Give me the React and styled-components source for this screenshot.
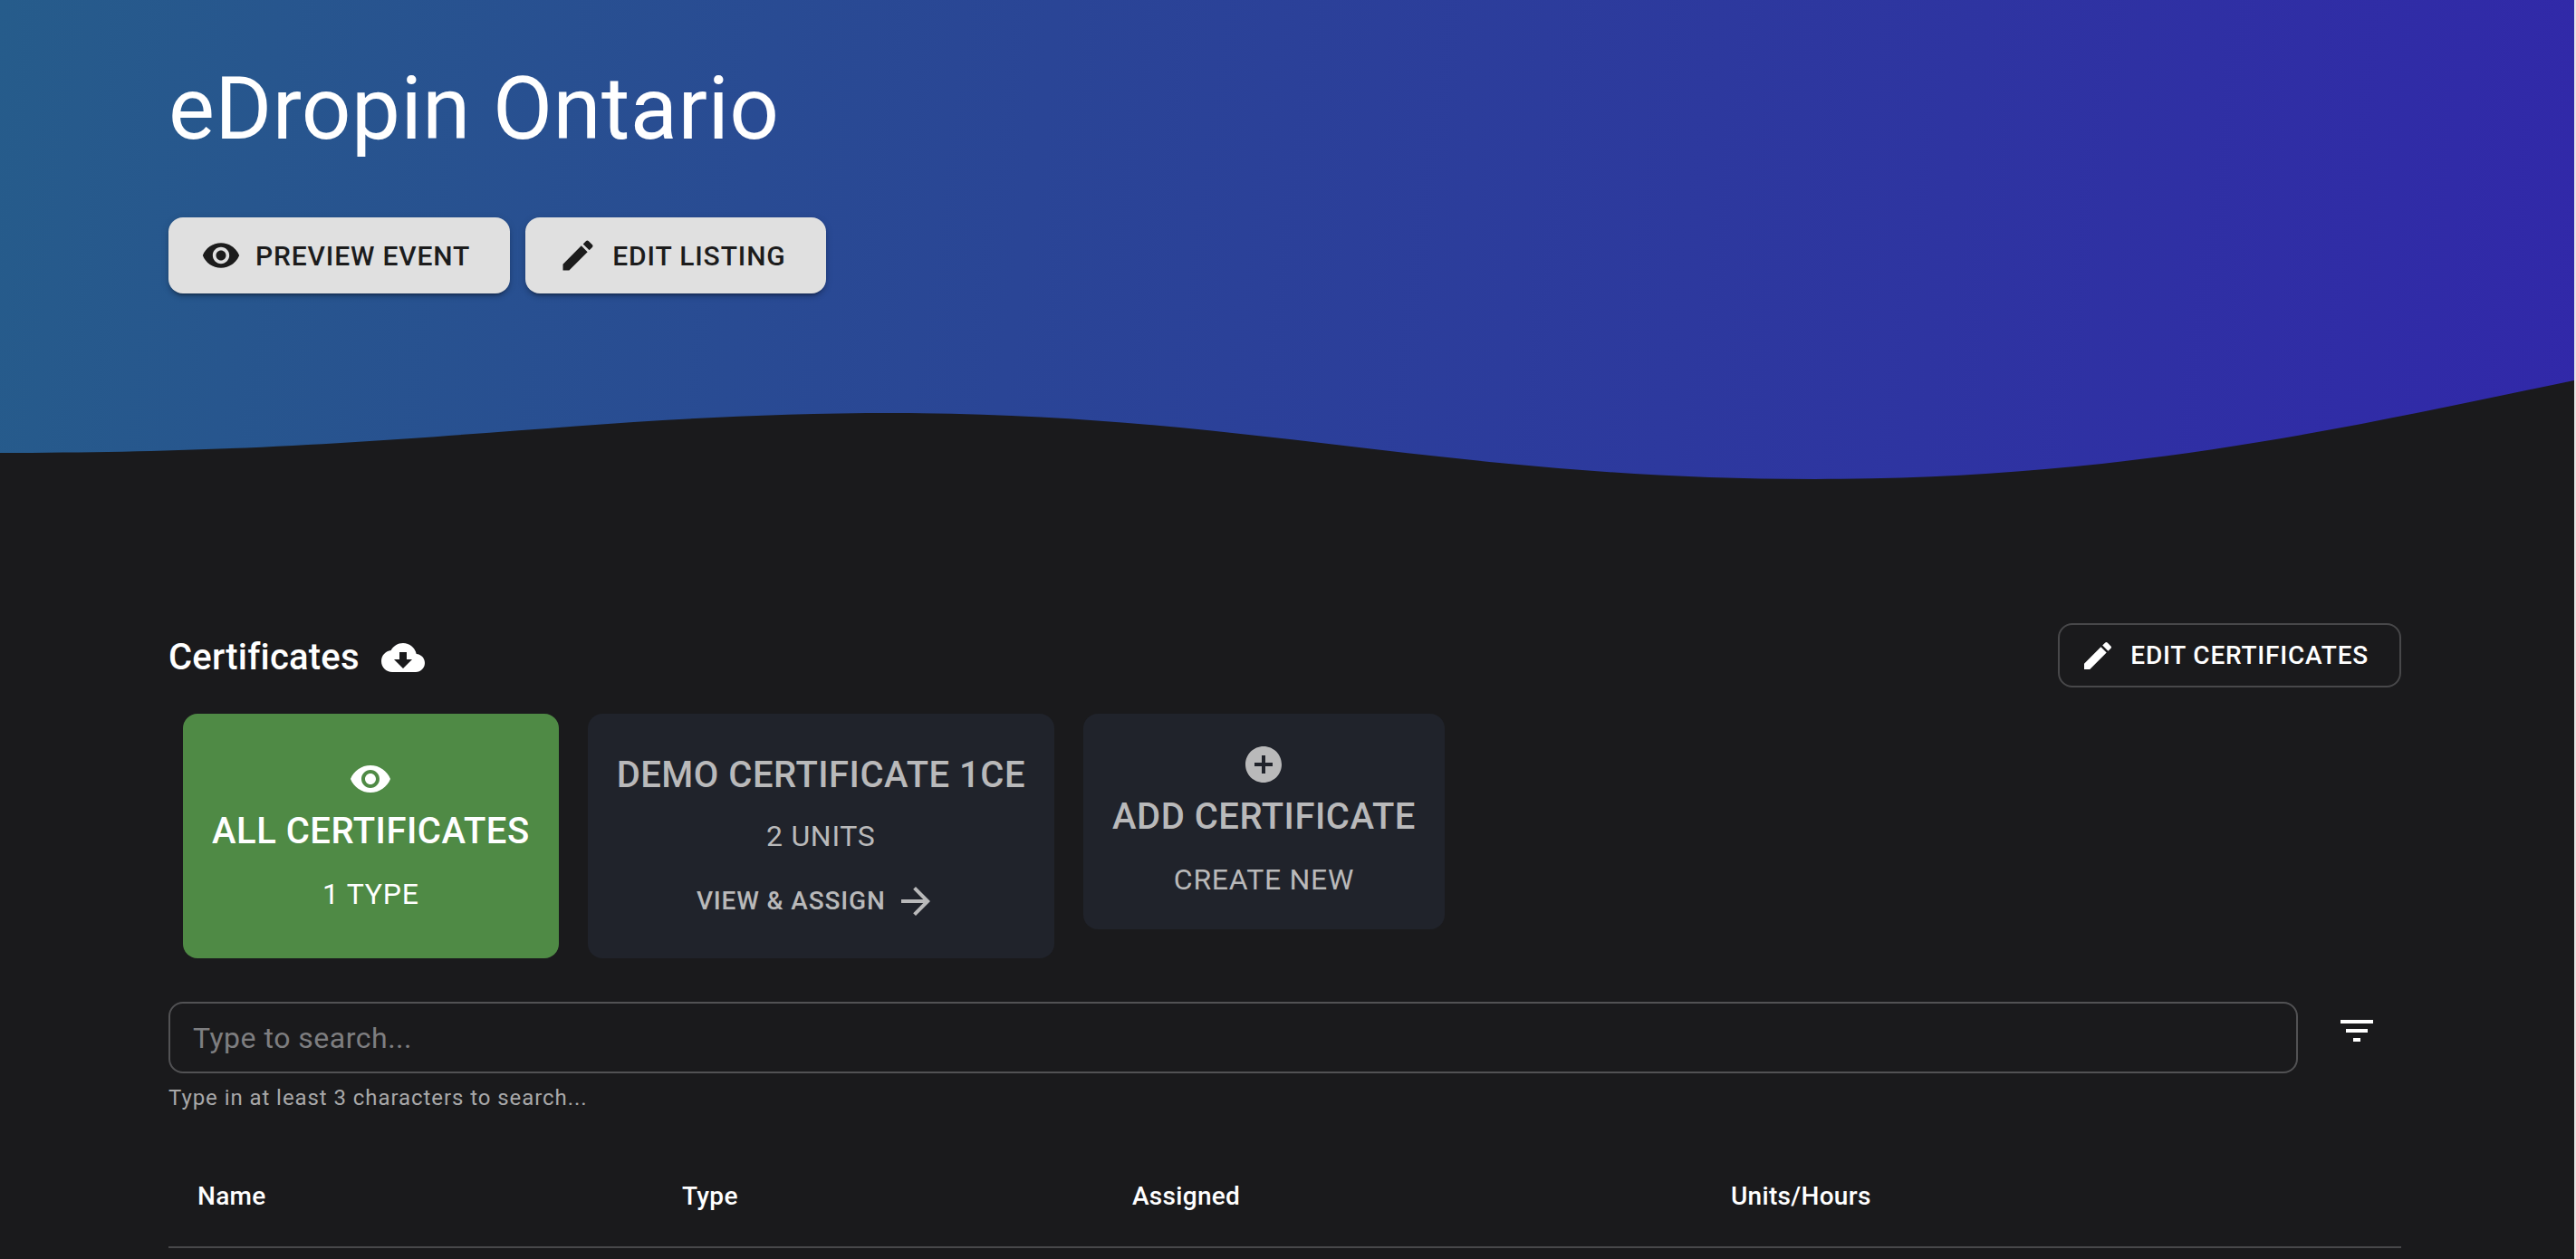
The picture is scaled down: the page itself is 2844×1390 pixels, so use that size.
import styled, { createGlobalStyle } from "styled-components";

const GlobalStyle = createGlobalStyle`
   html, body {
      margin: 0;
      height: 100%;
      overflow: hidden;
      background: #e6e6e6;
   }
   body {
      font-family: Roboto, "Liberation Sans", sans-serif;
      color: #fff;
   }
   * {
      box-sizing: border-box;
   }
`

// material icons
const EYE = "M12 4.5C7 4.5 2.73 7.61 1 12c1.73 4.39 6 7.5 11 7.5s9.27-3.11 11-7.5c-1.73-4.39-6-7.5-11-7.5zM12 17c-2.76 0-5-2.24-5-5s2.24-5 5-5 5 2.24 5 5-2.24 5-5 5zm0-8c-1.66 0-3 1.34-3 3s1.34 3 3 3 3-1.34 3-3-1.34-3-3-3z"
const PENCIL = "M3 17.25V21h3.75L17.81 9.94l-3.75-3.75L3 17.25zM20.71 7.04c.39-.39.39-1.02 0-1.41l-2.34-2.34a.9959.9959 0 0 0-1.41 0l-1.83 1.83 3.75 3.75 1.83-1.83z"
const CLOUD = "M19.35 10.04C18.67 6.59 15.64 4 12 4 9.11 4 6.6 5.64 5.35 8.04 2.34 8.36 0 10.91 0 14c0 3.31 2.69 6 6 6h13c2.76 0 5-2.24 5-5 0-2.64-2.05-4.78-4.65-4.96zM17 13l-5 5-5-5h3V9h4v4h3z"
const ARROW = "M12 4l-1.41 1.41L16.17 11H4v2h12.17l-5.58 5.59L12 20l8-8z"
const PLUS = "M12 2C6.48 2 2 6.48 2 12s4.48 10 10 10 10-4.48 10-10S17.52 2 12 2zm5 11h-4v4h-2v-4H7v-2h4V7h2v4h4v2z"
const FILTER = "M10 18h4v-2h-4v2zM3 6v2h18V6H3zm3 7h12v-2H6v2z"

const Icon = ({ d, size = 48 }) => (
   <IconSvg viewBox="0 0 24 24" $size={size}>
      <path d={d} fill="currentColor" fillRule="evenodd" />
   </IconSvg>
)

const columns = ["Name", "Type", "Assigned", "Units/Hours"]

const App = () => {
   return (
      <Page>
         <GlobalStyle />

         <Hero>
            <Title>eDropin Ontario</Title>
            <HeroActions>
               <HeroButton>
                  <Icon d={EYE} size={44} />
                  Preview Event
               </HeroButton>
               <HeroButton>
                  <Icon d={PENCIL} size={44} />
                  Edit Listing
               </HeroButton>
            </HeroActions>
            <Wave viewBox="0 0 2842 160" preserveAspectRatio="none">
               <path
                  d="M0 120 C 460 120, 640 76, 988 76 C 1370 76, 1600 149, 2004 149 C 2350 149, 2600 90, 2842 40 L 2842 160 L 0 160 Z"
                  fill="#1a1a1c"
               />
            </Wave>
         </Hero>

         <Content>
            <SectionHeader>
               <SectionTitle>
                  <h6>Certificates</h6>
                  <Icon d={CLOUD} size={48} />
               </SectionTitle>
               <OutlineButton>
                  <Icon d={PENCIL} size={40} />
                  Edit Certificates
               </OutlineButton>
            </SectionHeader>

            <CardRow>
               <Card $active $pad="48px 32px">
                  <Icon d={EYE} />
                  <CardTitle>All Certificates</CardTitle>
                  <CardSub>1 Type</CardSub>
               </Card>
               <Card $pad="34px 32px 39px">
                  <CardTitle>Demo Certificate 1CE</CardTitle>
                  <CardSub $gap="12px">2 Units</CardSub>
                  <CardLink>
                     View &amp; Assign
                     <Icon d={ARROW} />
                  </CardLink>
               </Card>
               <Card $pad="32px">
                  <Icon d={PLUS} />
                  <CardTitle>Add Certificate</CardTitle>
                  <CardSub>Create New</CardSub>
               </Card>
            </CardRow>

            <SearchRow>
               <SearchInput placeholder="Type to search..." />
               <FilterBtn>
                  <Icon d={FILTER} />
               </FilterBtn>
            </SearchRow>
            <Helper>Type in at least 3 characters to search...</Helper>

            <TableHead>
               {columns.map(c => <div key={c}>{c}</div>)}
            </TableHead>
         </Content>
      </Page>
   );
}

// styles
const IconSvg = styled.svg`
   width: ${p => p.$size}px;
   height: ${p => p.$size}px;
   flex-shrink: 0;
   display: block;
`

const Page = styled.div`
   width: 2842px;
   height: 1390px;
   overflow: hidden;
   background: #1a1a1c;
`

const Hero = styled.header`
   position: relative;
   height: 540px;
   padding: 64px 186px 0;
   background: linear-gradient(98deg, #265c8b 0%, #2a4596 40%, #3128a9 100%);
`

const Wave = styled.svg`
   position: absolute;
   left: 0;
   bottom: 0;
   width: 100%;
   height: 160px;
   display: block;
`

const Title = styled.h1`
   margin: 0;
   font-size: 96px;
   font-weight: 400;
   line-height: 112px;
   letter-spacing: .45px;
   color: #fff;
`

const HeroActions = styled.div`
   display: flex;
   gap: 17px;
   margin-top: 64px;
`

const HeroButton = styled.button`
   display: flex;
   align-items: center;
   gap: 16px;
   height: 84px;
   padding: 0 44px 0 36px;
   border: none;
   border-radius: 16px;
   background: #e0e0e0;
   color: #1c1c1c;
   font-family: inherit;
   font-size: 30px;
   font-weight: 500;
   letter-spacing: .86px;
   text-transform: uppercase;
   box-shadow: 0 6px 2px -4px rgba(0,0,0,.2), 0 4px 4px 0 rgba(0,0,0,.14), 0 2px 10px 0 rgba(0,0,0,.12);
`

const Content = styled.main`
   padding: 148px 191px 0 186px;
`

const SectionHeader = styled.div`
   display: flex;
   align-items: center;
   justify-content: space-between;
`

const SectionTitle = styled.div`
   display: flex;
   align-items: center;
   gap: 24px;
   padding-top: 4px;

   & > h6 {
      margin: 0;
      font-size: 40px;
      font-weight: 500;
      line-height: 64px;
      letter-spacing: .2px;
   }
`

const OutlineButton = styled.button`
   display: flex;
   align-items: center;
   gap: 16px;
   height: 71px;
   padding: 0 34px 0 22px;
   border: 2px solid #48484a;
   border-radius: 16px;
   background: transparent;
   color: #fff;
   font-family: inherit;
   font-size: 28px;
   font-weight: 500;
   letter-spacing: .8px;
   text-transform: uppercase;
`

const CardRow = styled.div`
   display: flex;
   align-items: flex-start;
   gap: 32px;
   margin-top: 29px;
   padding-left: 16px;
`

const Card = styled.div`
   display: flex;
   flex-direction: column;
   align-items: center;
   padding: ${p => p.$pad};
   border-radius: 16px;
   background: ${p => p.$active ? "#4f8a45" : "#20232b"};
   color: ${p => p.$active ? "#fff" : "#b9b9ba"};
   text-transform: uppercase;
`

const CardTitle = styled.div`
   padding-top: 3px;
   font-size: 40px;
   font-weight: 500;
   line-height: 61px;
   letter-spacing: .5px;
   white-space: nowrap;
`

const CardSub = styled.div`
   margin-top: ${p => p.$gap || "14px"};
   padding-top: 2px;
   font-size: 32px;
   line-height: 46px;
   letter-spacing: .7px;
`

const CardLink = styled.div`
   display: flex;
   align-items: center;
   gap: 9px;
   margin-top: 24px;
   padding-right: 9px;
   font-size: 28px;
   font-weight: 500;
   letter-spacing: .86px;
   line-height: 49px;
`

const SearchRow = styled.div`
   display: flex;
   margin-top: 48px;
`

const SearchInput = styled.input`
   flex: 1;
   height: 79px;
   padding: 0 25px;
   border: 2px solid #525254;
   border-radius: 16px;
   outline: none;
   background: transparent;
   color: #fff;
   font-family: inherit;
   font-size: 32px;
   letter-spacing: .5px;

   &::placeholder {
      color: #7e7e80;
      opacity: 1;
   }
`

const FilterBtn = styled.div`
   display: flex;
   align-self: flex-start;
   margin: 8px 25px 0 41px;
   color: #fff;
`

const Helper = styled.p`
   margin: 7px 0 0;
   font-size: 24px;
   line-height: 40px;
   letter-spacing: .93px;
   color: #a8a8a9;
`

const TableHead = styled.div`
   display: grid;
   grid-template-columns: 535px 497px 661px 1fr;
   margin-top: 36px;
   padding: 32px 32px 34px;
   border-bottom: 2px solid #48484a;
   font-size: 28px;
   font-weight: 500;
   line-height: 42px;
   letter-spacing: .3px;
`

export default App;
